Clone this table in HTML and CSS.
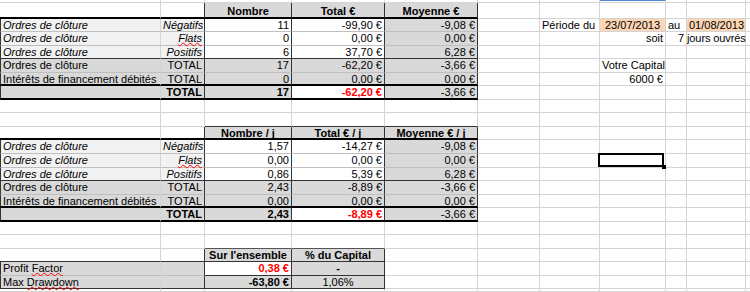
FILE: index.html
```html
<!DOCTYPE html>
<html lang="fr">
<head>
<meta charset="utf-8">
<title>Statistiques</title>
<link rel="stylesheet" href="styles.css">
</head>
<body>
<div class="sheet">
<!-- r0 partial -->
<div></div><div></div><div></div><div></div><div></div><div></div><div></div><div class="hl"></div><div></div><div></div><div></div>
<!-- r1 header -->
<div class="tb"></div><div class="tb dr"></div><div class="hd">Nombre</div><div class="hd">Total €</div><div class="hd">Moyenne €</div><div></div><div></div><div></div><div></div><div></div><div></div>
<!-- r2 -->
<div class="t l i dl">Ordres de clôture</div><div class="t l i r dr">Négatifs</div><div class="t r dr">11</div><div class="t r dr">-99,90 €</div><div class="t g r dr">-9,08 €</div><div></div><div>Période du</div><div class="o c">23/07/2013</div><div>au</div><div class="o c">01/08/2013</div><div></div>
<!-- r3 -->
<div class="t l i dl">Ordres de clôture</div><div class="t l i r dr up"><span class="sp">Flats</span></div><div class="t r dr">0</div><div class="t r dr">0,00 €</div><div class="t g r dr">0,00 €</div><div></div><div></div><div class="r">soit</div><div class="r">7</div><div class="np">jours ouvrés</div><div></div>
<!-- r4 -->
<div class="l i dl db">Ordres de clôture</div><div class="l i r dr db">Positifs</div><div class="r dr db">6</div><div class="r dr db">37,70 €</div><div class="g r dr db">6,28 €</div><div></div><div></div><div></div><div></div><div></div><div></div>
<!-- r5 -->
<div class="t g dl">Ordres de clôture</div><div class="t g r dr">TOTAL</div><div class="t g r dr">17</div><div class="t g r dr">-62,20 €</div><div class="t g r dr">-3,66 €</div><div></div><div></div><div>Votre Capital</div><div></div><div></div><div></div>
<!-- r6 -->
<div class="g dl tb">Intérêts de financement débités</div><div class="g r dr tb">TOTAL</div><div class="g r dr tb">0</div><div class="g r dr tb">0,00 €</div><div class="g r dr tb">0,00 €</div><div></div><div></div><div class="r">6000 €</div><div></div><div></div><div></div>
<!-- r7 -->
<div class="g dl tb"></div><div class="g r b dr tb">TOTAL</div><div class="g r b dr tb">17</div><div class="r b red dr tb">-62,20 €</div><div class="g r dr tb">-3,66 €</div><div></div><div></div><div></div><div></div><div></div><div></div>
<!-- r8 -->
<div></div><div></div><div></div><div></div><div></div><div></div><div></div><div></div><div></div><div></div><div></div>
<!-- r9 -->
<div></div><div></div><div class="db"></div><div class="db"></div><div class="db"></div><div></div><div></div><div></div><div></div><div></div><div></div>
<!-- r10 header -->
<div class="tb"></div><div class="tb dr"></div><div class="hd h2">Nombre / j</div><div class="hd h2">Total € / j</div><div class="hd h2">Moyenne € / j</div><div></div><div></div><div></div><div></div><div></div><div></div>
<!-- r11 -->
<div class="t l i dl">Ordres de clôture</div><div class="t l i r dr">Négatifs</div><div class="t r dr">1,57</div><div class="t r dr">-14,27 €</div><div class="t g r dr">-9,08 €</div><div></div><div></div><div></div><div></div><div></div><div></div>
<!-- r12 -->
<div class="t l i dl">Ordres de clôture</div><div class="t l i r dr up"><span class="sp">Flats</span></div><div class="t r dr">0,00</div><div class="t r dr">0,00 €</div><div class="t g r dr">0,00 €</div><div></div><div></div><div class="sel"></div><div></div><div></div><div></div>
<!-- r13 -->
<div class="l i dl db">Ordres de clôture</div><div class="l i r dr db">Positifs</div><div class="r dr db">0,86</div><div class="r dr db">5,39 €</div><div class="g r dr db">6,28 €</div><div></div><div></div><div></div><div></div><div></div><div></div>
<!-- r14 -->
<div class="t g dl">Ordres de clôture</div><div class="t g r dr">TOTAL</div><div class="t g r dr">2,43</div><div class="t g r dr">-8,89 €</div><div class="t g r dr">-3,66 €</div><div></div><div></div><div></div><div></div><div></div><div></div>
<!-- r15 -->
<div class="g dl tb">Intérêts de financement débités</div><div class="g r dr tb">TOTAL</div><div class="g r dr tb">0,00</div><div class="g r dr tb">0,00 €</div><div class="g r dr tb">0,00 €</div><div></div><div></div><div></div><div></div><div></div><div></div>
<!-- r16 -->
<div class="g dl tb"></div><div class="g r b dr tb">TOTAL</div><div class="g r b dr tb">2,43</div><div class="r b red dr tb">-8,89 €</div><div class="g r dr tb">-3,66 €</div><div></div><div></div><div></div><div></div><div></div><div></div>
<!-- r17 -->
<div></div><div></div><div></div><div></div><div></div><div></div><div></div><div></div><div></div><div></div><div></div>
<!-- r18 -->
<div></div><div></div><div class="dbm"></div><div class="dbm"></div><div></div><div></div><div></div><div></div><div></div><div></div><div></div>
<!-- r19 header -->
<div class="db"></div><div class="db dr"></div><div class="g b c dr db">Sur l'ensemble</div><div class="g b c dr db">% du Capital</div><div></div><div></div><div></div><div></div><div></div><div></div><div></div>
<!-- r20 -->
<div class="t g dl up">Profit <span class="sp">Factor</span></div><div class="t g dr"></div><div class="r b red dr db">0,38 €</div><div class="g c b dr db">-</div><div></div><div></div><div></div><div></div><div></div><div></div><div></div>
<!-- r21 -->
<div class="g dl db up">Max <span class="sp">Drawdown</span></div><div class="g dr db"></div><div class="g r b dr db">-63,80 €</div><div class="g c dr db">1,06%</div><div></div><div></div><div></div><div></div><div></div><div></div><div></div>
<!-- r22 partial -->
<div></div><div></div><div></div><div></div><div></div><div></div><div></div><div></div><div></div><div></div><div></div>
</div>
</body>
</html>
```

FILE: styles.css
```css
html, body {
  margin: 0;
  padding: 0;
  background: #fff;
}
body {
  width: 750px;
  height: 292px;
  overflow: hidden;
  font-family: "Liberation Sans", Arial, sans-serif;
  font-size: 11px;
  color: #000;
}
.sheet {
  display: grid;
  grid-template-columns: 161px 44px 87px 93px 93px 62px 60px 66px 21px 59px 1fr;
  grid-template-rows: 3px 15.55px repeat(20, 13.55px) 1fr;
  height: 292px;
}
.sheet > div {
  box-sizing: border-box;
  border-right: 1px solid #d4d4d4;
  border-bottom: 1px solid #d4d4d4;
  padding: 0 2px;
  line-height: 12px;
  white-space: nowrap;
  min-width: 0;
}
.sheet > .hd {
  background: #d9d9d9;
  font-weight: bold;
  text-align: center;
  border-right: 1px solid #333;
  border-bottom: 2px solid #000;
  padding-top: 2px;
}
.sheet > .h2 { padding-top: 0; }
.sheet > .t { border-bottom-color: #bfbfbf; }
.sheet > .l { background: #f2f2f2; }
.sheet > .g { background: #d9d9d9; }
.sheet > .o { background: #fcd5b4; }
.sheet > .np { padding-left: 0; letter-spacing: -0.1px; }
.i { font-style: italic; }
.b { font-weight: bold; }
.sheet > .r { text-align: right; }
.sheet > .c { text-align: center; }
.red { color: #ff0000; }
.sheet > .dl { border-left: 1px solid #333; }
.sheet > .dr { border-right-color: #333; }
.sheet > .db { border-bottom: 1px solid #333; }
.sheet > .dbm { border-bottom: 1px solid #555; }
.sheet > .tb { border-bottom: 2px solid #000; }
.sheet > .hl { border-top: 1px solid #4a86d4; }
.sheet > .up { position: relative; z-index: 1; }
.sp {
  text-decoration-line: underline;
  text-decoration-style: wavy;
  text-decoration-color: #ff0000;
  text-decoration-thickness: 1px;
  text-underline-offset: 0;
}
.sheet > .sel { position: relative; }
.sel::after {
  content: "";
  position: absolute;
  left: -2px;
  top: -1px;
  right: 1px;
  bottom: 0;
  border: 2px solid #000;
}
.sel::before {
  content: "";
  position: absolute;
  right: -1px;
  bottom: -2px;
  width: 4px;
  height: 4px;
  background: #000;
  z-index: 1;
}
```
